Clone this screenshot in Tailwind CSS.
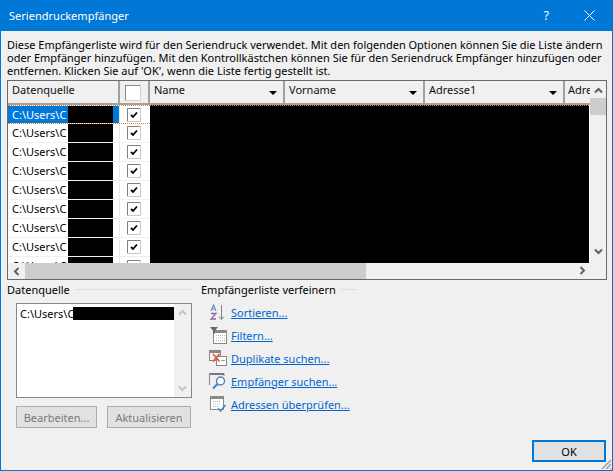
<!DOCTYPE html>
<html lang="de">
<head>
<meta charset="UTF-8">
<title>Seriendruckempfänger</title>
<script src="https://cdn.jsdelivr.net/npm/@tailwindcss/browser@4"></script>
</head>
<body class="m-0 overflow-hidden bg-[#f0f0f0]">
<div class="relative flex h-[471px] w-[613px] flex-col border border-t-0 border-[#0078d7] bg-[#f0f0f0] font-['Noto_Sans',sans-serif] text-[11px] leading-[13px] text-black">

  <!-- title bar -->
  <div class="-mx-px flex h-[31px] shrink-0 items-center bg-[#0078d7] text-white">
    <span class="ml-[9px] text-[11px] tracking-[0.02px]">Seriendruckempfänger</span>
    <span class="ml-auto mr-[35px] text-[12px]">?</span>
    <svg class="mr-[18px]" width="11" height="11" viewBox="0 0 11 11"><path d="M0.5 0.5L10.5 10.5M10.5 0.5L0.5 10.5" stroke="#fff" fill="none"/></svg>
  </div>

  <p class="mt-[7px] ml-[6px] h-[39px] w-[602px] shrink-0 whitespace-pre-line tracking-[-0.01px]">Diese Empfängerliste wird für den Seriendruck verwendet. Mit den folgenden Optionen können Sie die Liste ändern
oder Empfänger hinzufügen. Mit den Kontrollkästchen können Sie für den Seriendruck Empfänger hinzufügen oder
entfernen. Klicken Sie auf 'OK', wenn die Liste fertig gestellt ist.</p>

  <!-- recipient grid -->
  <div class="relative mt-[3px] ml-[6px] flex h-[200px] w-[600px] shrink-0 border border-[#696969] bg-[#f0f0f0]">
    <div class="flex w-[582px] flex-col">
      <div class="flex h-[24px] shrink-0 border-b-2 border-[#a0a0a0] text-[#111]">
        <div class="w-[112px] border-r-2 border-[#a0a0a0] pl-[4px] pt-[2px]">Datenquelle</div>
        <div class="flex w-[30px] items-center justify-center border-r-2 border-[#a0a0a0]"><span class="mr-[3px] mt-[1px] block h-[16px] w-[16px] border border-[#8a8a8a] border-r-[#d0d0d0] border-b-[#d0d0d0] bg-white"></span></div>
        <div class="relative w-[135px] border-r-2 border-[#a0a0a0] pl-[4px] pt-[2px]">Name<span class="absolute right-[6px] top-[10px] h-0 w-0 border-x-[4px] border-t-[4px] border-x-transparent border-t-black"></span></div>
        <div class="relative w-[140px] border-r-2 border-[#a0a0a0] pl-[4px] pt-[2px]">Vorname<span class="absolute right-[6px] top-[10px] h-0 w-0 border-x-[4px] border-t-[4px] border-x-transparent border-t-black"></span></div>
        <div class="relative w-[140px] border-r-2 border-[#a0a0a0] pl-[4px] pt-[2px]">Adresse1<span class="absolute right-[6px] top-[10px] h-0 w-0 border-x-[4px] border-t-[4px] border-x-transparent border-t-black"></span></div>
        <div class="w-[25px] overflow-hidden pl-[3px] pt-[2px]">Adresse2</div>
      </div>
      <div class="flex h-[158px] overflow-hidden bg-white">
        <div class="w-[142px] shrink-0">
          <div class="flex h-[19px] border-y border-dotted border-[#e08a2c] bg-white">
            <div class="flex w-[112px] border-r border-[#e8e8e8]"><span class="w-[60px] bg-[#0078d7] pl-[4px] leading-[17px] text-white">C:\Users\C</span><span class="w-[45px] bg-black"></span><span class="w-[6px] bg-[#0078d7]"></span></div>
            <div class="flex w-[30px] items-center justify-center"><svg class="mr-[3px]" width="14" height="14" viewBox="0 0 14 14"><path d="M0.5 13.5V0.5H13.5" fill="#fff" stroke="#808080"/><path d="M13.5 0.5V13.5H0.5" fill="#fff" stroke="#c8c8c8"/><path d="M4 7L6 9L10 4.5" fill="none" stroke="#000" stroke-width="1.8"/></svg></div>
          </div>
          <div class="flex h-[19px] border-b border-[#f0f0f0]">
            <div class="flex w-[112px] border-r border-[#e8e8e8]"><span class="w-[60px] pl-[4px] leading-[18px]">C:\Users\C</span><span class="w-[45px] bg-black"></span></div>
            <div class="flex w-[30px] items-center justify-center"><svg class="mr-[3px]" width="14" height="14" viewBox="0 0 14 14"><path d="M0.5 13.5V0.5H13.5" fill="#fff" stroke="#808080"/><path d="M13.5 0.5V13.5H0.5" fill="#fff" stroke="#c8c8c8"/><path d="M4 7L6 9L10 4.5" fill="none" stroke="#000" stroke-width="1.8"/></svg></div>
          </div>
          <div class="flex h-[19px] border-b border-[#f0f0f0]">
            <div class="flex w-[112px] border-r border-[#e8e8e8]"><span class="w-[60px] pl-[4px] leading-[18px]">C:\Users\C</span><span class="w-[45px] bg-black"></span></div>
            <div class="flex w-[30px] items-center justify-center"><svg class="mr-[3px]" width="14" height="14" viewBox="0 0 14 14"><path d="M0.5 13.5V0.5H13.5" fill="#fff" stroke="#808080"/><path d="M13.5 0.5V13.5H0.5" fill="#fff" stroke="#c8c8c8"/><path d="M4 7L6 9L10 4.5" fill="none" stroke="#000" stroke-width="1.8"/></svg></div>
          </div>
          <div class="flex h-[19px] border-b border-[#f0f0f0]">
            <div class="flex w-[112px] border-r border-[#e8e8e8]"><span class="w-[60px] pl-[4px] leading-[18px]">C:\Users\C</span><span class="w-[45px] bg-black"></span></div>
            <div class="flex w-[30px] items-center justify-center"><svg class="mr-[3px]" width="14" height="14" viewBox="0 0 14 14"><path d="M0.5 13.5V0.5H13.5" fill="#fff" stroke="#808080"/><path d="M13.5 0.5V13.5H0.5" fill="#fff" stroke="#c8c8c8"/><path d="M4 7L6 9L10 4.5" fill="none" stroke="#000" stroke-width="1.8"/></svg></div>
          </div>
          <div class="flex h-[19px] border-b border-[#f0f0f0]">
            <div class="flex w-[112px] border-r border-[#e8e8e8]"><span class="w-[60px] pl-[4px] leading-[18px]">C:\Users\C</span><span class="w-[45px] bg-black"></span></div>
            <div class="flex w-[30px] items-center justify-center"><svg class="mr-[3px]" width="14" height="14" viewBox="0 0 14 14"><path d="M0.5 13.5V0.5H13.5" fill="#fff" stroke="#808080"/><path d="M13.5 0.5V13.5H0.5" fill="#fff" stroke="#c8c8c8"/><path d="M4 7L6 9L10 4.5" fill="none" stroke="#000" stroke-width="1.8"/></svg></div>
          </div>
          <div class="flex h-[19px] border-b border-[#f0f0f0]">
            <div class="flex w-[112px] border-r border-[#e8e8e8]"><span class="w-[60px] pl-[4px] leading-[18px]">C:\Users\C</span><span class="w-[45px] bg-black"></span></div>
            <div class="flex w-[30px] items-center justify-center"><svg class="mr-[3px]" width="14" height="14" viewBox="0 0 14 14"><path d="M0.5 13.5V0.5H13.5" fill="#fff" stroke="#808080"/><path d="M13.5 0.5V13.5H0.5" fill="#fff" stroke="#c8c8c8"/><path d="M4 7L6 9L10 4.5" fill="none" stroke="#000" stroke-width="1.8"/></svg></div>
          </div>
          <div class="flex h-[19px] border-b border-[#f0f0f0]">
            <div class="flex w-[112px] border-r border-[#e8e8e8]"><span class="w-[60px] pl-[4px] leading-[18px]">C:\Users\C</span><span class="w-[45px] bg-black"></span></div>
            <div class="flex w-[30px] items-center justify-center"><svg class="mr-[3px]" width="14" height="14" viewBox="0 0 14 14"><path d="M0.5 13.5V0.5H13.5" fill="#fff" stroke="#808080"/><path d="M13.5 0.5V13.5H0.5" fill="#fff" stroke="#c8c8c8"/><path d="M4 7L6 9L10 4.5" fill="none" stroke="#000" stroke-width="1.8"/></svg></div>
          </div>
          <div class="flex h-[19px] border-b border-[#f0f0f0]">
            <div class="flex w-[112px] border-r border-[#e8e8e8]"><span class="w-[60px] pl-[4px] leading-[18px]">C:\Users\C</span><span class="w-[45px] bg-black"></span></div>
            <div class="flex w-[30px] items-center justify-center"><svg class="mr-[3px]" width="14" height="14" viewBox="0 0 14 14"><path d="M0.5 13.5V0.5H13.5" fill="#fff" stroke="#808080"/><path d="M13.5 0.5V13.5H0.5" fill="#fff" stroke="#c8c8c8"/><path d="M4 7L6 9L10 4.5" fill="none" stroke="#000" stroke-width="1.8"/></svg></div>
          </div>
          <div class="flex h-[19px]">
            <div class="flex w-[112px] border-r border-[#e8e8e8]"><span class="w-[60px] pl-[4px] leading-[18px]">C:\Users\C</span><span class="w-[45px] bg-black"></span></div>
            <div class="flex w-[30px] items-center justify-center"><svg class="mr-[3px]" width="14" height="14" viewBox="0 0 14 14"><path d="M0.5 13.5V0.5H13.5" fill="#fff" stroke="#808080"/><path d="M13.5 0.5V13.5H0.5" fill="#fff" stroke="#c8c8c8"/><path d="M4 7L6 9L10 4.5" fill="none" stroke="#000" stroke-width="1.8"/></svg></div>
          </div>
        </div>
        <div class="w-[439px] border-t border-dotted border-[#e08a2c] bg-black"></div>
      </div>
      <!-- horizontal scrollbar -->
      <div class="flex h-[16px] items-center bg-[#f0f0f0]">
        <svg class="ml-[5px]" width="7" height="9" viewBox="0 0 7 9"><path d="M5.5 1L2 4.5L5.5 8" fill="none" stroke="#606060" stroke-width="2"/></svg>
        <div class="ml-[5px] h-full w-[341px] bg-[#cdcdcd]"></div>
      </div>
    </div>
    <!-- vertical scrollbar -->
    <div class="relative flex w-[16px] flex-col items-center">
      <svg class="mt-[6px]" width="9" height="7" viewBox="0 0 9 7"><path d="M1 5.5L4.5 2L8 5.5" fill="none" stroke="#606060" stroke-width="2"/></svg>
      <div class="mt-[4px] h-[17px] w-full bg-[#cdcdcd]"></div>
      <svg class="mt-[133px]" width="9" height="7" viewBox="0 0 9 7"><path d="M1 1.5L4.5 5L8 1.5" fill="none" stroke="#606060" stroke-width="2"/></svg>
      <svg class="absolute bottom-[4px] right-[20px]" width="7" height="9" viewBox="0 0 7 9"><path d="M1.5 1L5 4.5L1.5 8" fill="none" stroke="#606060" stroke-width="2"/></svg>
    </div>
  </div>

  <!-- lower section -->
  <div class="mt-[3px] flex">
    <div class="ml-[6px] w-[186px]">
      <div class="flex h-[13px] items-center gap-[5px]"><span class="whitespace-nowrap">Datenquelle</span><span class="h-px flex-1 bg-[#dcdcdc]"></span></div>
      <div class="mt-[7px] ml-[9px] flex h-[95px] w-[176px] border border-[#828790] bg-white">
        <div class="mt-[3px] flex h-[13px] w-[157px]"><span class="w-[56px] pl-[3px]">C:\Users\C</span><span class="w-[101px] bg-black"></span></div>
        <div class="flex flex-1 flex-col items-center justify-between bg-[#f0f0f0] py-[5px]">
          <svg width="9" height="7" viewBox="0 0 9 7"><path d="M1 5.5L4.5 2L8 5.5" fill="none" stroke="#c4c4c4" stroke-width="2"/></svg>
          <svg width="9" height="7" viewBox="0 0 9 7"><path d="M1 1.5L4.5 5L8 1.5" fill="none" stroke="#c4c4c4" stroke-width="2"/></svg>
        </div>
      </div>
      <div class="mt-[8px] ml-[9px] flex gap-[10px] text-[#7a7a7a]">
        <div class="flex h-[22px] w-[81px] items-center justify-center border border-[#adadad] bg-[#e1e1e1]">Bearbeiten...</div>
        <div class="flex h-[22px] w-[84px] items-center justify-center border border-[#adadad] bg-[#e1e1e1]">Aktualisieren</div>
      </div>
    </div>

    <div class="ml-[8px] flex w-[156px] flex-col">
      <div class="flex h-[13px] items-center gap-[5px]"><span class="whitespace-nowrap">Empfängerliste verfeinern</span><span class="h-px flex-1 bg-[#dcdcdc]"></span></div>
      <div class="mt-[7px] ml-[8px] flex flex-col gap-[5px] text-[#0066cc] underline">
        <div class="flex h-[18px] items-center gap-[4px]">
          <svg width="18" height="18" viewBox="0 0 18 18"><path d="M2 8L4.5 2L7 8M3 6H6" fill="none" stroke="#5a8fc4" stroke-width="1.1"/><path d="M2 10.5H7L2 16H7" fill="none" stroke="#9366b4" stroke-width="1.3"/><path d="M12.5 2V16M10 13.5L12.5 16.5L15 13.5" fill="none" stroke="#808080"/></svg>
          <span>Sortieren...</span>
        </div>
        <div class="flex h-[18px] items-center gap-[4px]">
          <svg width="18" height="18" viewBox="0 0 18 18"><rect x="4.5" y="4.5" width="13" height="13" fill="#fff" stroke="#8a8a8a"/><path d="M5 5H17V7H5Z" fill="#8a8a8a"/><path d="M7 9.5H16M7 12H16M7 14.5H16" stroke="#b8b8b8" stroke-dasharray="1 1"/><path d="M1 1H9L6 4.5V7.5H4V4.5Z" fill="#666"/></svg>
          <span>Filtern...</span>
        </div>
        <div class="flex h-[18px] items-center gap-[4px]">
          <svg width="18" height="18" viewBox="0 0 18 18"><rect x="0.5" y="1.5" width="11" height="10" fill="#f4f4f4" stroke="#888"/><path d="M1 2H11V4H1Z" fill="#888"/><rect x="7.5" y="7.5" width="10" height="9" fill="#fff" stroke="#888"/><path d="M4 5L10.5 12.5M10.5 5L4 12.5" stroke="#dc5a44" stroke-width="1.8"/><path d="M12 11.5H16" stroke="#999"/></svg>
          <span>Duplikate suchen...</span>
        </div>
        <div class="flex h-[18px] items-center gap-[4px]">
          <svg width="18" height="18" viewBox="0 0 18 18"><path d="M0.5 13V1.5H15V4" fill="none" stroke="#888"/><path d="M1 1H15V3H1Z" fill="#777"/><circle cx="11.5" cy="9" r="4" fill="#fff" stroke="#4a86c0" stroke-width="1.5"/><path d="M8.5 12L4 16.5" stroke="#4a86c0" stroke-width="2.2"/></svg>
          <span>Empfänger suchen...</span>
        </div>
        <div class="flex h-[18px] items-center gap-[4px]">
          <svg width="18" height="18" viewBox="0 0 18 18"><rect x="1.5" y="1.5" width="13" height="13" fill="#fff" stroke="#8a8a8a"/><path d="M2 2H14V4H2Z" fill="#8a8a8a"/><path d="M4 6.5H12M4 9H12M4 11.5H9" stroke="#b8b8b8" stroke-dasharray="1 1"/><path d="M9 13L11.5 16L16.5 10" fill="none" stroke="#4a86c0" stroke-width="1.5"/></svg>
          <span>Adressen überprüfen...</span>
        </div>
      </div>
    </div>
  </div>

  <div class="absolute bottom-[8px] right-[6px] flex h-[22px] w-[74px] items-center justify-center border-2 border-[#0078d7] bg-[#e1e1e1]">OK</div>
  <svg class="absolute bottom-0 right-0" width="11" height="11" viewBox="0 0 11 11"><path d="M1 10L10 1M5 10L10 5M9 10L10 9" stroke="#a0a0a0" stroke-width="1.5"/></svg>
</div>
</body>
</html>
